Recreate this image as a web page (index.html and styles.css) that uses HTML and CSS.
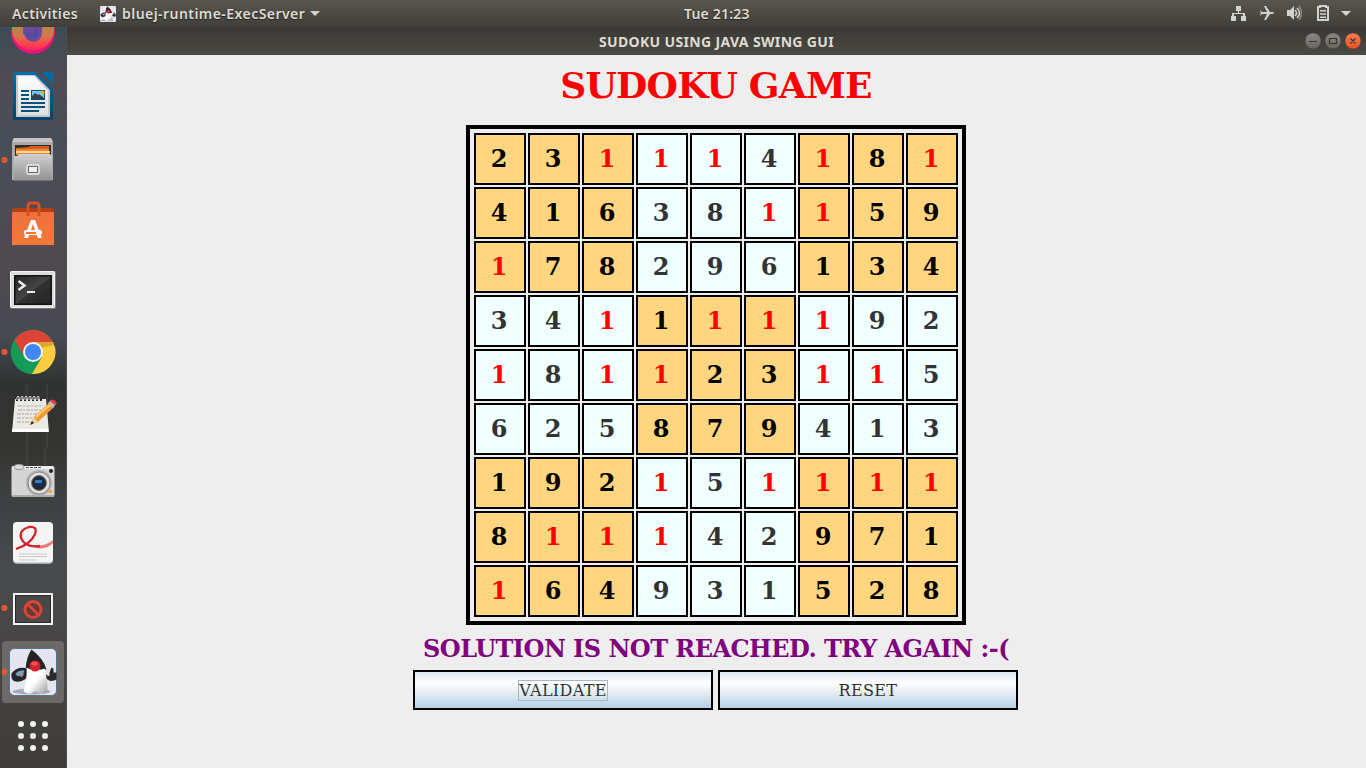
FILE: index.html
```html
<!DOCTYPE html>
<html lang="en">
<head>
<meta charset="utf-8">
<title>SUDOKU USING JAVA SWING GUI</title>
<link rel="stylesheet" href="styles.css">
</head>
<body>
<header class="topbar">
  <div class="top-left">
    <span class="activities">Activities</span>
    <svg class="app-icon" width="16" height="16" viewBox="0 0 48 48"><rect width="48" height="48" rx="4" fill="#e6e7f2"/><use href="#duke"/></svg>
    <span class="app-name">bluej-runtime-ExecServer</span>
    <svg class="caret" width="10" height="5"><path d="M0 0H10L5 5Z" fill="#d2d2cc"/></svg>
  </div>
  <span class="clock">Tue 21:23</span>
  <svg class="tray" width="136" height="27" viewBox="1230 0 136 27" fill="#d2d2cf">
    <path d="M1236 6h5v5h-2v2h6v3h1v5h-5v-5h2v-2h-9v2h2v5h-5v-5h1v-3h6v-2h-2z"/>
    <path d="M1260 10l2 2 5 0-3-6h2l4 6h2q2 0 2 1t-2 1h-2l-4 6h-2l3-6-5 0-2 2 .8-3z"/>
    <path d="M1287 10h3l4-4v14l-4-4h-3z"/>
    <path d="M1295 10q3 3 0 6M1297 8q5 5 0 10" fill="none" stroke="#d2d2cf" stroke-width="1.6"/>
    <path d="M1299 6q5 7 0 14" fill="none" stroke="#89877f" stroke-width="1.5"/>
    <path d="M1318 7h2v-1h6v1h2v13h-10z" fill="none" stroke="#d2d2cf" stroke-width="2"/>
    <path d="M1320 10h6v1.600h-6zM1320 13.200h6v1.600h-6zM1320 16.400h6v1.600h-6z"/>
    <path d="M1341 11h10l-5 5z"/>
  </svg>
</header>
<div class="desktop">
  <nav class="dock">
    <svg class="item" viewBox="0 0 67 64">
      <defs>
        <linearGradient id="ff" x2="0" y2="1"><stop offset=".4" stop-color="#a98b48"/><stop offset=".66" stop-color="#d6764a"/><stop offset=".86" stop-color="#ff3e4e"/><stop offset="1" stop-color="#f02a60"/></linearGradient>
        <linearGradient id="silver" x2="0" y2="1"><stop stop-color="#d0d0d0"/><stop offset="1" stop-color="#949494"/></linearGradient>
        <linearGradient id="bag" x2="0" y2="1"><stop stop-color="#ee7040"/><stop offset="1" stop-color="#f07a35"/></linearGradient>
        <linearGradient id="dark" x2="1" y2="1"><stop stop-color="#262626"/><stop offset=".5" stop-color="#454545"/><stop offset=".52" stop-color="#303030"/><stop offset="1" stop-color="#262626"/></linearGradient>
        <linearGradient id="blue" x2="0" y2="1"><stop stop-color="#066ea8"/><stop offset="1" stop-color="#05436a"/></linearGradient>
        <linearGradient id="paper" x2="0" y2="1"><stop stop-color="#fff"/><stop offset="1" stop-color="#dedede"/></linearGradient>
        <linearGradient id="body" x2="1" y2="1"><stop offset=".5" stop-color="#fff"/><stop offset="1" stop-color="#999"/></linearGradient>
        <g id="duke">
          <ellipse cx="22" cy="43" rx="19" ry="3" fill="#777b86" opacity=".55"/>
          <path d="M18 20Q8 17 2 25Q1 32 6 33Q14 34 18 28Z" fill="#22252b"/>
          <path d="M6 25q4-4 9-3l-2 5q-6 2-7-2z" fill="#6f9fc4"/><path d="M9 26l6-1-3 4z" fill="#bf8264"/>
          <path d="M34 22q4 7 6 5v-3l2-5 2 1v4h3v7q-7 4-12-3z" fill="#292929"/>
          <path d="M22 1Q17 8 16 21H37Q34 10 22 1Z" fill="#242424"/>
          <path d="M17 19Q18 30 14 42q3 4 8 3 4-4 8 0 6 2 8-2Q38 30 35 20Q26 25 17 19Z" fill="url(#body)"/>
          <circle cx="25.500" cy="17.500" r="5.500" fill="#d9202d"/><ellipse cx="25" cy="15" rx="3" ry="2" fill="#f15356"/>
        </g>
      </defs>
      <circle cx="33" cy="32" r="22" fill="#e6147b"/><circle cx="33" cy="29.500" r="21" fill="url(#ff)"/><path d="M23 24h19v9q-1 8-8 9-8-1-9-6l-2-3z" fill="#6b4a9d"/><path d="M25 31q8 5 13-3v8q-4 4-12 0z" fill="#524aa0"/>
    </svg>
    <svg class="item" viewBox="0 0 67 64">
      <path d="M15 8h20l18 17v29q0 2-2 2H15q-2 0-2-2V10q0-2 2-2z" fill="url(#blue)"/><path d="M41 8h12v12z" fill="#0369a3"/>
      <path d="M16 11h19l15 15v27H16z" fill="#c8c8c8"/><path d="M18 12h16l14 15v24H18z" fill="url(#paper)"/>
      <path d="M21 26h8v2h-8zM21 30h8v2h-8zM21 34h8v2h-8zM21 38h24v2H21zM21 42h24v2H21zM21 46h18v2H21z" fill="#07517d"/>
      <path d="M31 26h14v10H31z" fill="#07517d"/><path d="M32 27h12v8H32z" fill="#78c8f1"/><circle cx="42.500" cy="28.500" r="2" fill="#e4b52f"/><path d="M32 35v-3l3-3 3 2 1-1 5 4v1z" fill="#344149"/>
    </svg>
    <svg class="item" viewBox="0 0 67 64">
      <path d="M14 10h37l2 5v37H12V15z" fill="#aaa"/><path d="M14 10h37l2 4H12z" fill="#c5c5c5"/><path d="M15 17h36v12H15z" fill="#302b25"/>
      <path d="M16 20l13-1 1-1h19v8H16z" fill="#d95b20"/><path d="M16 21h33v6H16z" fill="#e98d2c"/><path d="M16 23h34v2H16z" fill="#ffd59a"/>
      <path d="M14 28h3l2-2h31l2 2v24H14z" fill="url(#silver)"/><path d="M14 52h38v1H14z" fill="#777"/>
      <rect x="27" y="37" width="12" height="9" rx="2" fill="#aaa" stroke="#d9d9d9" stroke-width="2"/><path d="M28.500 38.500h9v6h-9z" fill="#eee" stroke="#666"/>
      <circle cx="4.500" cy="32" r="3" fill="#e9582c"/>
    </svg>
    <svg class="item" viewBox="0 0 67 64">
      <path d="M12 18l2-2h38l2 2v12H12z" fill="#b33f15"/><path d="M12 20h42v33H12z" fill="url(#bag)"/>
      <path d="M28 24V14q0-3 3-3h5q3 0 3 3v10" fill="none" stroke="#d95020" stroke-width="3"/>
      <path d="M31 28h4l7 18h-4l-2-5h-6l-2 5h-4zM33 32l-2 6h4z" fill="#fff" fill-rule="evenodd"/><rect x="24" y="38" width="18" height="5" rx="2" fill="#fff"/><path d="M26 40h10v2H26z" fill="#f17330"/>
    </svg>
    <svg class="item" viewBox="0 0 67 64">
      <rect x="10" y="15" width="46" height="38" rx="1" fill="#777"/><rect x="10.500" y="15.500" width="44" height="36" rx="1" fill="#ddd" stroke="#f5f5f5"/><path d="M14 19h38v30H14z" fill="#111"/><path d="M15.500 20.500h35v27h-35z" fill="url(#dark)"/>
      <path d="M18.500 25l6 4.500-6 4.500" fill="none" stroke="#eee" stroke-width="2.500"/><path d="M27 35h8v2h-8z" fill="#eee"/>
    </svg>
    <svg class="item" viewBox="0 0 67 64">
      <circle cx="33" cy="32" r="22.200" fill="#149b58"/><path d="M33 42L23 35L14.500 20A22 22 0 0 1 52.500 22H33z" fill="#db4437"/><path d="M33 22h20A22 22 0 0 1 32 54L42 37z" fill="#ffcd40"/>
      <path d="M33 22h20l1 3-14 3z" fill="#b48420" opacity=".5"/><circle cx="33" cy="32" r="10" fill="#f3f3f3"/><circle cx="33" cy="32" r="8" fill="#4285f4"/>
      <circle cx="4.500" cy="32" r="3" fill="#e9582c"/>
    </svg>
    <svg class="item" viewBox="0 0 67 64">
      <path d="M27 0v64M47 0v64" stroke="#575653" opacity=".6"/>
      <path d="M15 15h31l3 33H12z" fill="#eceae5"/><path d="M12 45h36v3H12z" fill="#fff"/>
      <path d="M18 22h25M18 26h24M17 30h25M17 34h22M17 38h18" stroke="#a8a8a6" stroke-dasharray="4 1 2 1"/>
      <path d="M17 15v2m4-2v2m4-2v2m4-2v2m4-2v2m4-2v2m4-2v2" stroke="#222" stroke-width="2"/>
      <path d="M17 16v-3q1-2 2 0v3m2 0v-3q1-2 2 0v3m2 0v-3q1-2 2 0v3m2 0v-3q1-2 2 0v3m2 0v-3q1-2 2 0v3m2 0v-3q1-2 2 0v3" fill="none" stroke="#ccc"/>
      <path d="M30 41l4-8L50 18l4 5-16 15z" fill="#f09a32"/><path d="M36 33l15-13" stroke="#ffd175" stroke-width="2"/><path d="M48 19l3-3 5 4-3 4z" fill="#bbb"/><path d="M51 16q3-2 6 3l-2 2-5-4z" fill="#e53840"/><path d="M30 41l4-8 4 5z" fill="#f4d09d"/><path d="M30 41l2-4 2 2z" fill="#222"/>
    </svg>
    <svg class="item" viewBox="0 0 67 64">
      <path d="M27 0v20M45 0v20" stroke="#575653" opacity=".6"/>
      <rect x="11.500" y="18" width="43" height="31" rx="2" fill="#d5d5d5"/><path d="M12 18h41v3H12z" fill="#eee"/><path d="M12 47h42v2H12z" fill="#aaa"/><ellipse cx="19" cy="19" rx="5" ry="2.500" fill="#ddd" stroke="#999"/><path d="M26 19.500h16" stroke="#555" stroke-dasharray="3 1"/>
      <circle cx="39" cy="35" r="13" fill="#b1b1b1"/><circle cx="39" cy="35" r="11" fill="#e1e1e1" stroke="#888"/><circle cx="39" cy="35" r="7.500" fill="#25282d" stroke="#777"/><path d="M35 31h8v7h-8z" fill="#063168"/><path d="M35 32h7v3h-7z" fill="#4478ad"/><circle cx="51" cy="23" r="2" fill="#222"/><path d="M49 42h3v3h-3z" fill="#f3a52b"/>
    </svg>
    <svg class="item" viewBox="0 0 67 64">
      <rect x="13" y="11" width="40" height="41" rx="4" fill="#aaa"/><rect x="13" y="10" width="40" height="40.500" rx="4" fill="#f4f4f4"/>
      <path d="M34 33Q45 35 53 28v3Q47 38 36 36z" fill="#ec7a7d"/><path d="M16 37Q31 32 35 22Q38 14 29 15Q19 18 21 26Q25 36 40 34" fill="none" stroke="#d2262f" stroke-width="2.300"/>
      <path d="M19 42h28M19 44.500h28M19 48h18" stroke="#c8c8c8"/>
    </svg>
    <svg class="item" viewBox="0 0 67 64">
      <path d="M13 17h40v32H13z" fill="#f4f4f2"/><path d="M15 19h36v28H15z" fill="#292929"/><path d="M16 20h34v26H16z" fill="#484848"/><circle cx="33" cy="33.500" r="8" fill="#643a37" stroke="#d94537" stroke-width="3"/><path d="M27.500 28l11 11" stroke="#d94537" stroke-width="3"/>
      <circle cx="4.500" cy="32" r="3" fill="#e9582c"/>
    </svg>
    <svg class="item" viewBox="0 0 67 64">
      <rect x="2" y="1" width="62" height="62" rx="4" fill="#6b6968"/><rect x="9.500" y="8.500" width="47" height="47" rx="5" fill="#e4e5ee" stroke="#4d7894"/>
      <use href="#duke" transform="translate(9.500 8.500)"/><circle cx="4.500" cy="32" r="3" fill="#e9582c"/>
    </svg>
    <svg class="item" viewBox="0 0 67 64" fill="#f2f1ef">
      <circle cx="21" cy="20" r="3"/><circle cx="33" cy="20" r="3"/><circle cx="45" cy="20" r="3"/><circle cx="21" cy="32" r="3"/><circle cx="33" cy="32" r="3"/><circle cx="45" cy="32" r="3"/><circle cx="21" cy="44" r="3"/><circle cx="33" cy="44" r="3"/><circle cx="45" cy="44" r="3"/>
    </svg>
  </nav>
  <main class="window">
    <div class="titlebar">
      <span class="title">SUDOKU USING JAVA SWING GUI</span>
      <svg class="controls" width="66" height="28" viewBox="1300 27 66 28">
        <defs><linearGradient id="gray" x2="0" y2="1"><stop stop-color="#8b8983"/><stop offset="1" stop-color="#66645e"/></linearGradient><linearGradient id="orange" x2="0" y2="1"><stop stop-color="#f47b50"/><stop offset="1" stop-color="#e65323"/></linearGradient></defs>
        <circle cx="1313" cy="41" r="8" fill="url(#gray)" stroke="#34332f" stroke-width=".4"/><circle cx="1333" cy="41" r="8" fill="url(#gray)" stroke="#34332f" stroke-width=".4"/><circle cx="1353" cy="41" r="8" fill="url(#orange)" stroke="#34332f" stroke-width=".4"/>
        <path d="M1309 41.500h8M1329.500 38.500h7v5h-7zM1350.500 38.500l5 5m0-5l-5 5" fill="none" stroke="#383631" stroke-width="1.200"/>
      </svg>
    </div>
    <div class="content">
      <h1 class="heading">SUDOKU GAME</h1>
      <div class="board">
        <div class="row"><b>2</b><b>3</b><b class="r">1</b><b class="r">1</b><b class="r">1</b><b>4</b><b class="r">1</b><b>8</b><b class="r">1</b></div>
        <div class="row"><b>4</b><b>1</b><b>6</b><b>3</b><b>8</b><b class="r">1</b><b class="r">1</b><b>5</b><b>9</b></div>
        <div class="row"><b class="r">1</b><b>7</b><b>8</b><b>2</b><b>9</b><b>6</b><b>1</b><b>3</b><b>4</b></div>
        <div class="row mid"><b>3</b><b>4</b><b class="r">1</b><b>1</b><b class="r">1</b><b class="r">1</b><b class="r">1</b><b>9</b><b>2</b></div>
        <div class="row mid"><b class="r">1</b><b>8</b><b class="r">1</b><b class="r">1</b><b>2</b><b>3</b><b class="r">1</b><b class="r">1</b><b>5</b></div>
        <div class="row mid"><b>6</b><b>2</b><b>5</b><b>8</b><b>7</b><b>9</b><b>4</b><b>1</b><b>3</b></div>
        <div class="row"><b>1</b><b>9</b><b>2</b><b class="r">1</b><b>5</b><b class="r">1</b><b class="r">1</b><b class="r">1</b><b class="r">1</b></div>
        <div class="row"><b>8</b><b class="r">1</b><b class="r">1</b><b class="r">1</b><b>4</b><b>2</b><b>9</b><b>7</b><b>1</b></div>
        <div class="row"><b class="r">1</b><b>6</b><b>4</b><b>9</b><b>3</b><b>1</b><b>5</b><b>2</b><b>8</b></div>
      </div>
      <div class="status">SOLUTION IS NOT REACHED. TRY AGAIN :-(</div>
      <div class="buttons">
        <button class="btn"><span class="label focus">VALIDATE</span></button>
        <button class="btn"><span class="label">RESET</span></button>
      </div>
    </div>
  </main>
</div>
</body>
</html>
```
FILE: styles.css
```css
* { box-sizing: border-box; }
body { margin: 0; width: 1366px; height: 768px; overflow: hidden; background: #eee; font-family: "Noto Sans", sans-serif; }
.topbar { height: 27px; display: grid; grid-template-columns: 684px auto 1fr; align-items: center; background: linear-gradient(#59564e, #403f3a); color: #dfdbd2; font-size: 14px; font-weight: 600; line-height: 27px; text-shadow: 0 1px 1px #222; white-space: nowrap; }
.top-left { display: flex; align-items: center; padding-left: 12px; }
.activities { width: 88px; letter-spacing: .35px; }
.app-icon { margin-right: 6px; }
.app-name { width: 188px; letter-spacing: .45px; }
.clock { letter-spacing: .2px; }
.tray { justify-self: end; }
.desktop { display: flex; height: 741px; }
.dock { width: 67px; height: 741px; overflow: hidden; background: linear-gradient(#3c4c54, #504b52 7%, #484e58 15%, #504950 31%, #464a50 42%, #303332 48%, #353431 57%, #3d4040 63%, #484b4d 73%, #484544 84%, #3e3d3c); box-shadow: inset -1px 0 #4d4d4f; }
.item { display: block; width: 67px; height: 64px; }
.item:first-child { margin-top: -27px; }
.window { flex: 1; }
.titlebar { height: 28px; display: grid; grid-template-columns: 1fr auto 1fr; align-items: center; background: linear-gradient(#393834, #4c4a44); color: #dfdbd2; font-size: 14px; font-weight: 700; white-space: nowrap; }
.title { grid-column: 2; letter-spacing: .35px; }
.controls { justify-self: end; }
.content { display: flex; flex-direction: column; align-items: center; font-family: "DejaVu Serif", serif; padding-right: 1px; }
.heading { margin: 0; height: 70px; padding-top: 5px; font-size: 36px; line-height: 50px; letter-spacing: -.75px; color: #f00; }
.board { width: 500px; height: 500px; border: 4px solid #000; padding: 4px; display: grid; gap: 2px; background: #eee; }
.row { display: grid; grid-template-columns: repeat(9, 52px); gap: 2px; height: 52px; }
.row b { border: 2px solid #000; padding-right: 2px; background: #f0ffff; color: #333; font-size: 24px; line-height: 48px; text-align: center; }
.row:not(.mid) b:nth-child(-n+3), .row:not(.mid) b:nth-child(n+7), .mid b:nth-child(n+4):nth-child(-n+6) { background: #ffd580; color: #000; }
.board .row b.r { color: #f00; }
.status { height: 45px; padding-top: 6px; font-size: 24px; line-height: 36px; letter-spacing: -.54px; font-weight: 700; color: #800080; white-space: nowrap; }
.buttons { display: flex; gap: 5px; padding-right: 1px; }
.btn { width: 300px; height: 40px; padding: 0; border: 2px solid #000; background: linear-gradient(#dde8f3, #fff 30%, #b8cfe5); font: 16px "DejaVu Serif", serif; color: #333; }
.label { display: inline-block; height: 21px; line-height: 19px; border: 1px solid transparent; letter-spacing: .35px; }
.focus { width: 90px; border-color: #a3b8cc; }
```
